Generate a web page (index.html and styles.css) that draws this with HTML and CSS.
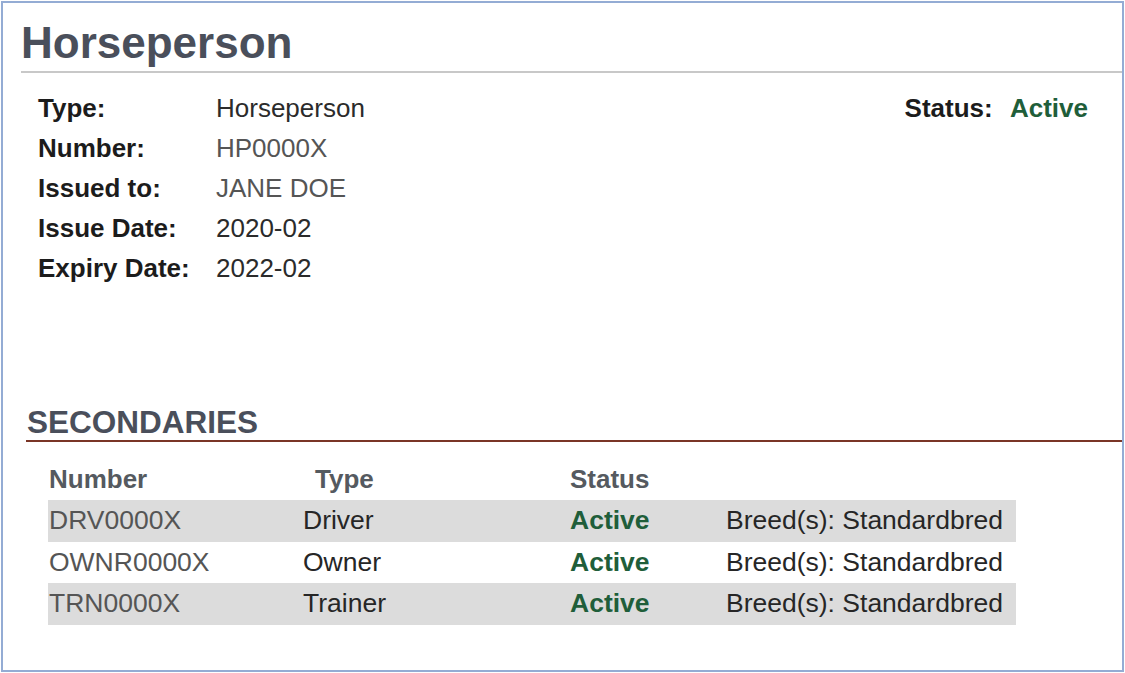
FILE: index.html
```html
<!DOCTYPE html>
<html lang="en">
<head>
    <meta charset="UTF-8">
    <meta name="viewport" content="width=device-width, initial-scale=1.0">
    <title>Horseperson Licence</title>
    <link rel="stylesheet" href="styles.css">
</head>
<body>

    <div class="card">
        <h1 class="title">Horseperson</h1>

        <div class="summary">
            <div class="details">
                <span class="label">Type:</span><span class="value dark">Horseperson</span>
                <span class="label">Number:</span><span class="value">HP0000X</span>
                <span class="label">Issued to:</span><span class="value">JANE DOE</span>
                <span class="label">Issue Date:</span><span class="value dark">2020-02</span>
                <span class="label">Expiry Date:</span><span class="value dark">2022-02</span>
            </div>
            <div class="status">
                <span class="label">Status:</span>
                <span class="active">Active</span>
            </div>
        </div>

        <h2 class="section-title">SECONDARIES</h2>

        <div class="secondaries">
            <div class="row head">
                <span>Number</span>
                <span class="type-head">Type</span>
                <span>Status</span>
                <span></span>
            </div>
            <div class="row shaded">
                <span class="num">DRV0000X</span>
                <span>Driver</span>
                <span class="active">Active</span>
                <span>Breed(s): Standardbred</span>
            </div>
            <div class="row">
                <span class="num">OWNR0000X</span>
                <span>Owner</span>
                <span class="active">Active</span>
                <span>Breed(s): Standardbred</span>
            </div>
            <div class="row shaded">
                <span class="num">TRN0000X</span>
                <span>Trainer</span>
                <span class="active">Active</span>
                <span>Breed(s): Standardbred</span>
            </div>
        </div>
    </div>

</body>
</html>
```

FILE: styles.css
```css
* {
    margin: 0;
    padding: 0;
    box-sizing: border-box;
}

body {
    font-family: "Liberation Sans", Arial, sans-serif;
    background: #ffffff;
    margin: 1px;
}

.card {
    height: 671px;
    border: 2px solid #94acd4;
    background: #ffffff;
}

.title {
    margin-left: 18px;
    padding: 15px 0 3px 0;
    font-size: 44px;
    line-height: 50px;
    font-weight: bold;
    color: #4a4f5b;
    border-bottom: 2px solid #c8c8c8;
}

.summary {
    display: flex;
    justify-content: space-between;
    padding: 15px 34px 0 35px;
    font-size: 26px;
    line-height: 40px;
}

.details {
    display: grid;
    grid-template-columns: 178px auto;
}

.label {
    font-weight: bold;
    color: #1c1c1c;
}

.value {
    color: #555555;
}

.value.dark {
    color: #2b2b2b;
}

.status .label {
    margin-right: 10px;
}

.active {
    font-weight: bold;
    color: #1f5e3a;
}

.section-title {
    margin: 116px 0 0 23px;
    padding-left: 1px;
    font-size: 31.5px;
    line-height: 36px;
    font-weight: bold;
    color: #4a4f5b;
    border-bottom: 2px solid #7a3526;
}

.secondaries {
    width: 968px;
    margin: 16px 0 0 45px;
    font-size: 26.5px;
}

.row {
    display: grid;
    grid-template-columns: 254px 267px 156px 1fr;
    padding-left: 1px;
    height: 41.5px;
    line-height: 41.5px;
    color: #262626;
}

.row.head {
    height: 42px;
    line-height: 42px;
    font-size: 26px;
    font-weight: bold;
    color: #555a60;
}

.type-head {
    padding-left: 12px;
}

.row.shaded {
    background: #dcdcdc;
}

.num {
    color: #555555;
}
```
